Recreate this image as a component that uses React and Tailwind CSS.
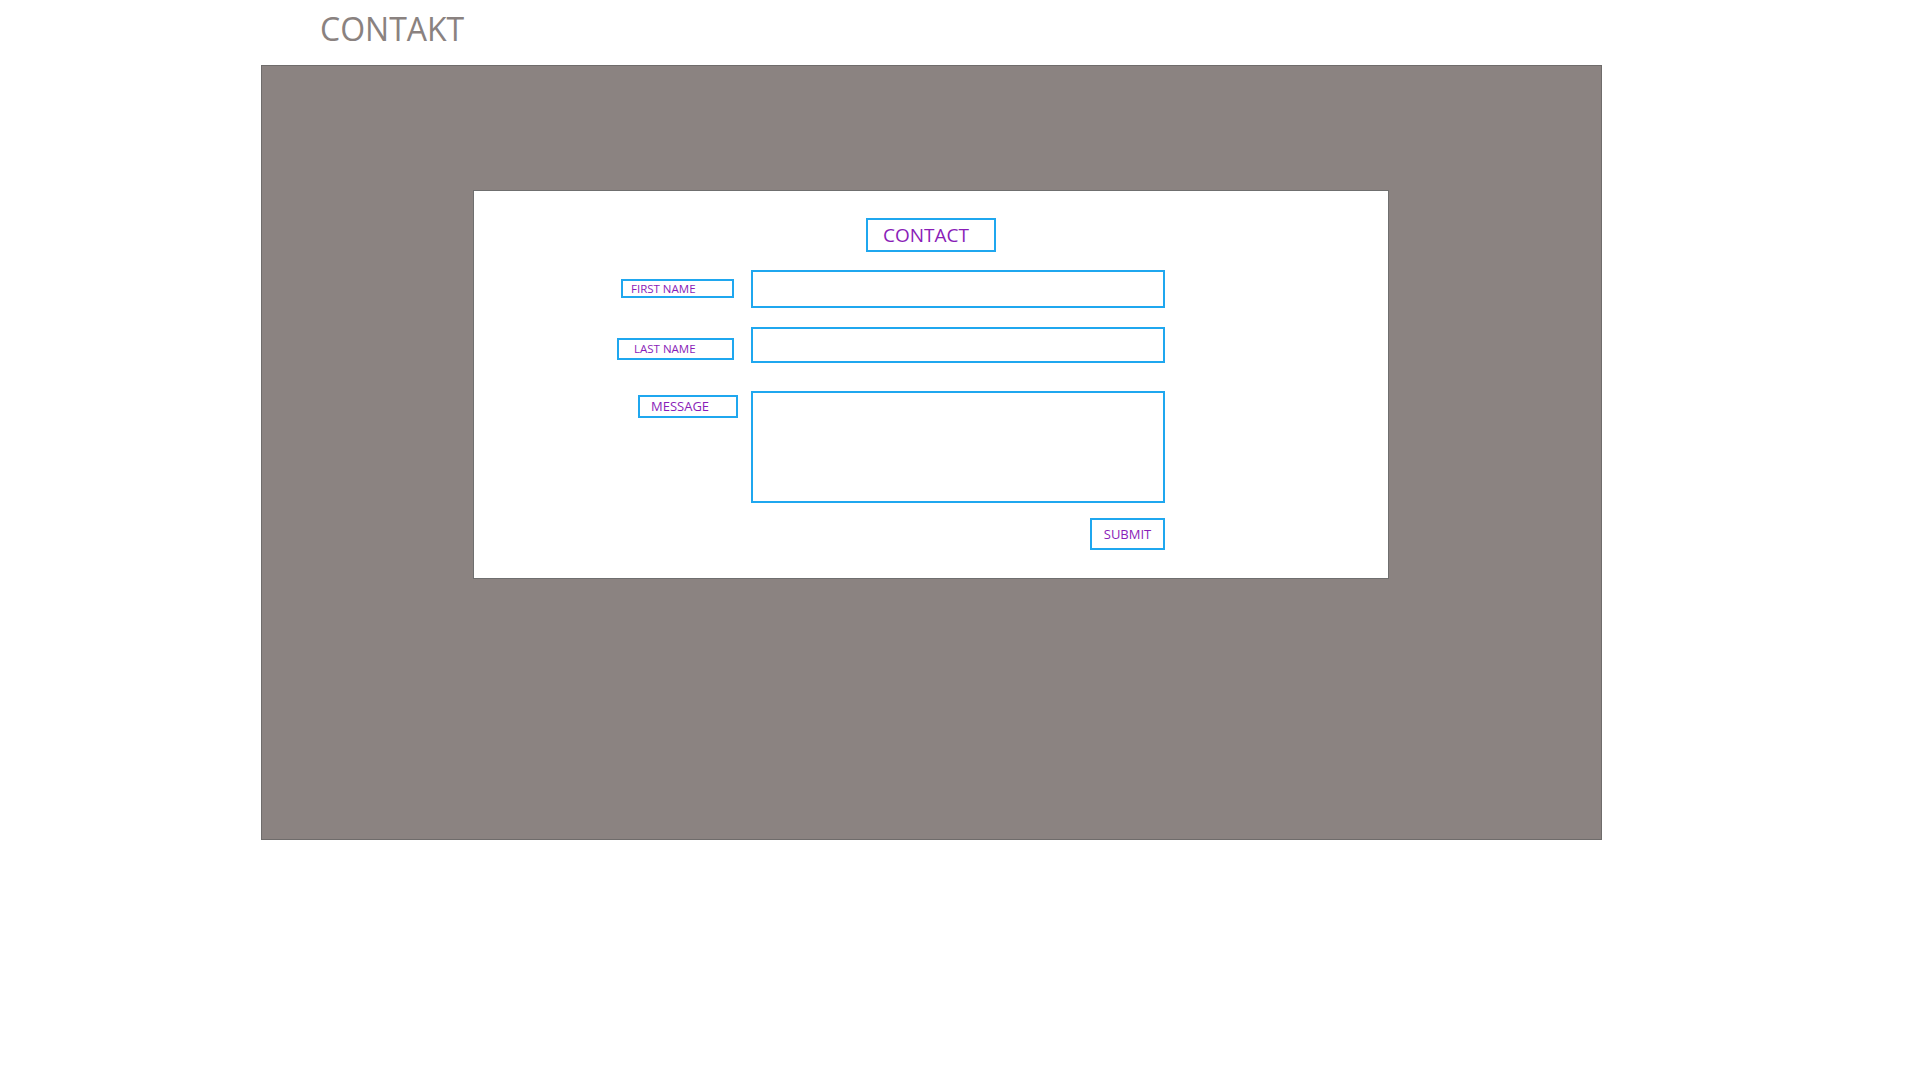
import React from 'react'

const font = { fontFamily: '"Open Sans", "Noto Sans", Arial, sans-serif' }

export default function App() {
  return (
    <div className="min-h-screen bg-white" style={font}>
      {/* page title */}
      <div className="h-[65px] pt-[5px] pl-[320px]">
        <h1 className="text-[32px] text-[#8a8280] leading-normal">CONTAKT</h1>
      </div>

      {/* gray stage */}
      <div className="ml-[261px] w-[1341px] h-[775px] bg-[#8b8381] border border-[#6f6c6b] pt-[124px] pl-[211px]">
        <div className="w-[916px] h-[389px] bg-white border border-[#6f6f6f] pt-[27px]">
          <div className="flex justify-center">
            <div className="w-[130px] h-[34px] border-2 border-[#1fa7ef] pl-[15px] text-[19px] leading-[30px] text-[#8a1db8]">
              CONTACT
            </div>
          </div>

          <form className="mt-[18px]">
            <div className="flex items-start">
              <div className="w-[277px] flex justify-end pr-[17px] pt-[9px]">
                <label className="w-[113px] h-[19px] border-2 border-[#1fa7ef] pl-[8px] text-[11.5px] leading-[15px] text-[#8a1db8]">
                  FIRST NAME
                </label>
              </div>
              <input className="w-[414px] h-[38px] border-2 border-[#1fa7ef] outline-none" />
            </div>

            <div className="flex items-start mt-[19px]">
              <div className="w-[277px] flex justify-end pr-[17px] pt-[11px]">
                <label className="w-[117px] h-[22px] border-2 border-[#1fa7ef] pl-[15px] text-[11.5px] leading-[18px] text-[#8a1db8]">
                  LAST NAME
                </label>
              </div>
              <input className="w-[414px] h-[36px] border-2 border-[#1fa7ef] outline-none" />
            </div>

            <div className="flex items-start mt-[28px]">
              <div className="w-[277px] flex justify-end pr-[13px] pt-[4px]">
                <label className="w-[100px] h-[23px] border-2 border-[#1fa7ef] pl-[11px] text-[13px] leading-[18px] text-[#8a1db8]">
                  MESSAGE
                </label>
              </div>
              <textarea className="w-[414px] h-[112px] border-2 border-[#1fa7ef] outline-none resize-none" />
            </div>

            <div className="flex mt-[15px] pl-[616px]">
              <button
                type="button"
                className="w-[75px] h-[32px] border-2 border-[#1fa7ef] text-[13px] leading-[28px] text-[#8a1db8] bg-white"
              >
                SUBMIT
              </button>
            </div>
          </form>
        </div>
      </div>
    </div>
  )
}
